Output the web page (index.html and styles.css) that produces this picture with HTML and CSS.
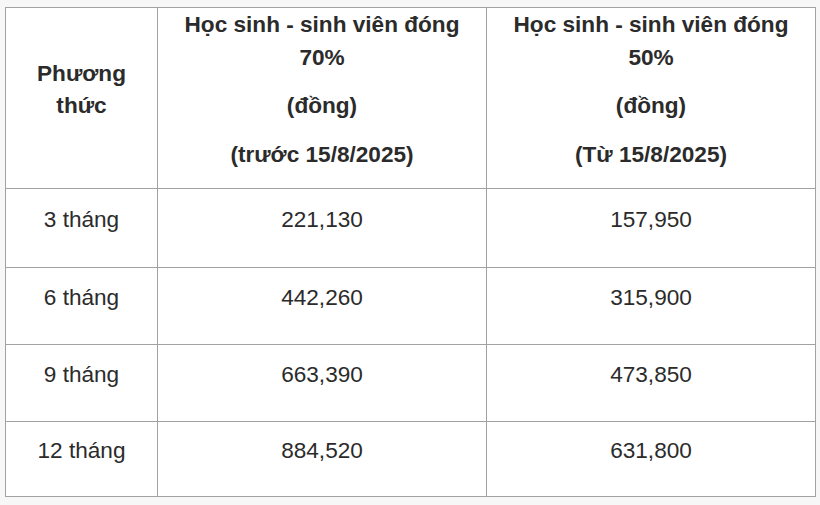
FILE: index.html
```html
<!DOCTYPE html>
<html lang="vi">
<head>
<meta charset="utf-8">
<title>Bảng phí BHYT học sinh - sinh viên</title>
<link rel="stylesheet" href="styles.css">
</head>
<body>
<table class="fee-table">
  <colgroup>
    <col class="col-method">
    <col class="col-old">
    <col class="col-new">
  </colgroup>
  <thead>
    <tr class="row-head">
      <th><p>Phương thức</p></th>
      <th><p>Học sinh - sinh viên đóng 70%</p><p>(đồng)</p><p>(trước 15/8/2025)</p></th>
      <th><p>Học sinh - sinh viên đóng 50%</p><p>(đồng)</p><p>(Từ 15/8/2025)</p></th>
    </tr>
  </thead>
  <tbody>
    <tr class="row-a">
      <td><p>3 tháng</p></td>
      <td><p>221,130</p></td>
      <td><p>157,950</p></td>
    </tr>
    <tr class="row-b">
      <td><p>6 tháng</p></td>
      <td><p>442,260</p></td>
      <td><p>315,900</p></td>
    </tr>
    <tr class="row-b">
      <td><p>9 tháng</p></td>
      <td><p>663,390</p></td>
      <td><p>473,850</p></td>
    </tr>
    <tr class="row-c">
      <td><p>12 tháng</p></td>
      <td><p>884,520</p></td>
      <td><p>631,800</p></td>
    </tr>
  </tbody>
</table>
</body>
</html>
```
FILE: styles.css
```css
html, body {
  margin: 0;
  padding: 0;
  background: #f7f7f8;
}

body {
  padding: 7px 0 0 5px;
  font-family: "Liberation Sans", Arial, Helvetica, sans-serif;
  color: #2b2b2b;
}

.fee-table {
  border-collapse: collapse;
  background: #ffffff;
  width: 810px;
  table-layout: fixed;
}

.col-method { width: 152px; }
.col-old { width: 329px; }
.col-new { width: 329px; }

.fee-table th,
.fee-table td {
  border: 1px solid #a2a2a2;
  padding: 0 10px;
  text-align: center;
  vertical-align: middle;
  font-size: 22.6px;
  line-height: 32.5px;
}

.fee-table th {
  font-weight: bold;
}

.fee-table td {
  font-weight: normal;
}

.fee-table p {
  margin: 0 0 16px;
}

.row-head { height: 181px; }
.row-a { height: 79px; }
.row-b { height: 77px; }
.row-c { height: 75px; }
```
